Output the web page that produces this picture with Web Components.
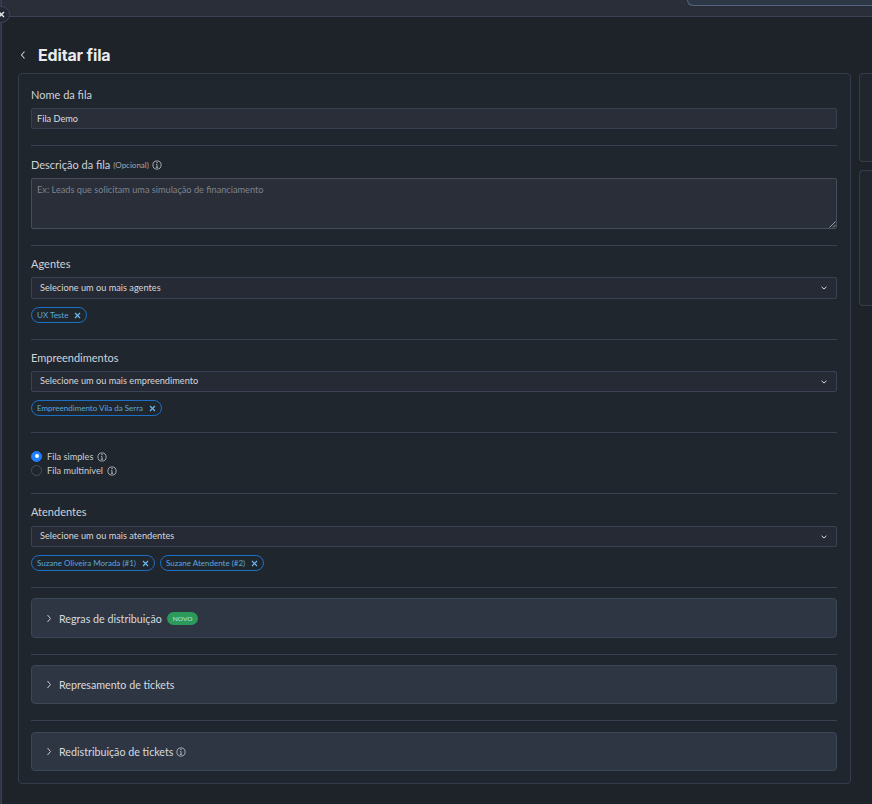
<!DOCTYPE html>
<html lang="pt-BR">
<head>
<meta charset="utf-8">
<title>Editar fila</title>
<style>
  html, body { margin: 0; height: 100%; background: #1e2229; overflow: hidden; }
  body { font-family: Lato, "Liberation Sans", sans-serif; color: #d5d8de; }
</style>
</head>
<body>
<app-shell>
  <side-panel slot="side" height="89"></side-panel>
  <side-panel slot="side" height="136"></side-panel>

  <form-section pad="13px 0 16px">
    <field-label gap="6">Nome da fila</field-label>
    <text-box>Fila Demo</text-box>
  </form-section>

  <form-section pad="11px 0 16px">
    <field-label gap="6">Descrição da fila <small>(Opcional)</small> <info-icon></info-icon></field-label>
    <text-box multiline placeholder>Ex: Leads que solicitam uma simulação de financiamento</text-box>
  </form-section>

  <form-section pad="10px 0 16px">
    <field-label gap="6">Agentes</field-label>
    <select-box height="22">Selecione um ou mais agentes</select-box>
    <chip-list>
      <tag-chip>UX Teste</tag-chip>
    </chip-list>
  </form-section>

  <form-section pad="10px 0 16px">
    <field-label gap="6">Empreendimentos</field-label>
    <select-box>Selecione um ou mais empreendimento</select-box>
    <chip-list>
      <tag-chip>Empreendimento Vila da Serra</tag-chip>
    </chip-list>
  </form-section>

  <form-section pad="16px 0 16px">
    <radio-row checked>Fila simples <info-icon></info-icon></radio-row>
    <radio-row>Fila multinível <info-icon></info-icon></radio-row>
  </form-section>

  <form-section pad="10px 0 16px">
    <field-label gap="7">Atendentes</field-label>
    <select-box>Selecione um ou mais atendentes</select-box>
    <chip-list>
      <tag-chip>Suzane Oliveira Morada (#1)</tag-chip>
      <tag-chip>Suzane Atendente (#2)</tag-chip>
    </chip-list>
  </form-section>

  <form-section pad="10px 0 16px">
    <accordion-row height="40">Regras de distribuição <new-badge>NOVO</new-badge></accordion-row>
  </form-section>

  <form-section pad="10px 0 16px">
    <accordion-row>Represamento de tickets</accordion-row>
  </form-section>

  <form-section pad="11px 0 0" last>
    <accordion-row>Redistribuição de tickets <info-icon></info-icon></accordion-row>
  </form-section>
</app-shell>

<script>
  // small helper so each element only has to give its markup
  class ShadowEl extends HTMLElement {
    constructor() {
      super();
      this.attachShadow({ mode: 'open' });
    }
    connectedCallback() {
      this.shadowRoot.innerHTML = this.markup();
    }
  }

  class AppShell extends ShadowEl {
    markup() {
      return `
      <style>
        :host { display: flex; flex-direction: column; height: 804px; overflow: hidden; position: relative; }
        .rail { position: absolute; left: 0; top: 0; bottom: 0; width: 1px; background: #2f3547; border-right: 1px solid #3a4056; }
        .toggle {
          position: absolute; left: -7px; top: 6px; width: 15px; height: 15px; border-radius: 50%;
          background: #232834; border: 1px solid #3d4659; display: flex; align-items: center; justify-content: center;
        }
        .top {
          height: 16px; flex: none; background: #292e39; border-bottom: 1px solid #3a4254;
          display: flex; justify-content: flex-end;
        }
        .search {
          width: 184px; height: 5px; background: #2d3847; border: 1px solid #55637f; border-top: 0; border-right: 0;
          border-bottom-left-radius: 7px;
        }
        .body { flex: 1; padding: 0 0 0 18px; min-height: 0; }
        h1 {
          margin: 0; height: 56px; box-sizing: border-box; padding-top: 20px;
          display: flex; align-items: center; gap: 11px;
          font: 700 16px/22px Inter, Lato, sans-serif; letter-spacing: -0.15px; color: #e9ebee;
        }
        .row { display: flex; gap: 8px; align-items: flex-start; }
        .card {
          flex: none; box-sizing: border-box; width: 833px; height: 711px; padding: 0 13px 0 12px;
          background: #20262e; border: 1px solid #343c4b; border-radius: 4px;
        }
        .side { flex: 1; display: flex; flex-direction: column; gap: 8px; min-width: 0; }
      </style>
      <div class="rail"></div>
      <header class="top"><div class="search"></div></header>
      <div class="toggle">
        <svg width="7" height="7" viewBox="0 0 7 7" fill="none" stroke="#e6e8ec" stroke-width="1.4"><path d="M1 1l5 5M6 1L1 6"/></svg>
      </div>
      <div class="body">
        <h1>
          <svg width="8" height="10" viewBox="0 0 8 10" fill="none" stroke="#c9ccd2" stroke-width="1.1" style="margin-left:1px"><path d="M5.5 1.5L2.5 5l3 3.5"/></svg>
          <span>Editar fila</span>
        </h1>
        <div class="row">
          <main class="card"><slot></slot></main>
          <aside class="side"><slot name="side"></slot></aside>
        </div>
      </div>`;
    }
  }

  class SidePanel extends ShadowEl {
    markup() {
      const h = this.getAttribute('height') || 88;
      return `
      <style>
        :host { display: block; box-sizing: border-box; height: ${h}px; background: #20262e;
          border: 1px solid #343c4b; border-right: 0; border-radius: 4px 0 0 4px; }
      </style>`;
    }
  }

  class FormSection extends ShadowEl {
    markup() {
      const pad = this.getAttribute('pad') || '12px 0 16px';
      const line = this.hasAttribute('last') ? '0' : '1px solid #3a4150';
      return `
      <style>
        :host { display: block; padding: ${pad}; border-bottom: ${line}; }
      </style>
      <slot></slot>`;
    }
  }

  class FieldLabel extends ShadowEl {
    markup() {
      const gap = this.getAttribute('gap') || 5;
      return `
      <style>
        :host { display: flex; align-items: center; gap: 3px; height: 15px; font-size: 11px; line-height: 15px; color: #cfd2d8; margin-bottom: ${gap}px; }
        ::slotted(small) { font-size: 8px; line-height: 15px; color: #a3a8b2; padding-top: 2px; }
      </style>
      <slot></slot>`;
    }
  }

  class TextBox extends ShadowEl {
    markup() {
      const multi = this.hasAttribute('multiline');
      const ph = this.hasAttribute('placeholder');
      return `
      <style>
        :host {
          display: block; box-sizing: border-box; position: relative;
          height: ${multi ? 51 : 21}px; padding: ${multi ? '4px' : '3px'} 5px 0 5px;
          background: #292e38; border: 1px solid ${multi ? '#474d5a' : '#39404f'}; border-radius: 2px;
          font-size: 9.2px; line-height: 13px; color: ${ph ? '#7e838d' : '#d9dbe0'};
        }
        svg { position: absolute; right: 0; bottom: 0; }
      </style>
      <slot></slot>
      ${multi ? '<svg width="7" height="7" viewBox="0 0 7 7" fill="none" stroke="#b9bcc3" stroke-width=".8"><path d="M0.5 6.5l6-6M4 6.5l2.5-2.5"/></svg>' : ''}`;
    }
  }

  class SelectBox extends ShadowEl {
    markup() {
      const h = this.getAttribute('height') || 21;
      return `
      <style>
        :host {
          display: flex; align-items: center; justify-content: space-between; box-sizing: border-box;
          height: ${h}px; padding: 0 8px 2px 8px;
          background: #252a34; border: 1px solid #3a4354; border-radius: 2px;
          font-size: 9.2px; color: #d5d7dc;
        }
        svg { margin-top: 2px; }
      </style>
      <slot></slot>
      <svg width="8" height="6" viewBox="0 0 8 6" fill="none" stroke="#d4d6db" stroke-width="1"><path d="M1.5 1.8L4 4l2.5-2.2"/></svg>`;
    }
  }

  class ChipList extends ShadowEl {
    markup() {
      return `
      <style>
        :host { display: flex; gap: 5px; margin-top: 8px; }
      </style>
      <slot></slot>`;
    }
  }

  class TagChip extends ShadowEl {
    markup() {
      return `
      <style>
        :host {
          display: inline-flex; align-items: center; gap: 6px; box-sizing: border-box;
          height: 16px; padding: 0 5px 0 5px;
          border: 1px solid #1d6fc4; border-radius: 8px;
          font-size: 8px; color: #5ba7dc; white-space: nowrap;
        }
      </style>
      <slot></slot>
      <svg width="7" height="7" viewBox="0 0 7 7" fill="none" stroke="#6db8ec" stroke-width="1.2"><path d="M1 1l5 5M6 1L1 6"/></svg>`;
    }
  }

  class RadioRow extends ShadowEl {
    markup() {
      const on = this.hasAttribute('checked');
      return `
      <style>
        :host { display: flex; align-items: center; gap: 5px; height: 14px; font-size: 9.2px; color: #c9ccd3; }
        .dot {
          flex: none; box-sizing: border-box; width: 11px; height: 11px; border-radius: 50%;
          background: ${on ? '#1f7dff' : '#20262e'}; border: 1px solid ${on ? '#1f7dff' : '#4a505c'};
          display: flex; align-items: center; justify-content: center;
        }
        .dot i { width: 4px; height: 4px; border-radius: 50%; background: #fff; display: ${on ? 'block' : 'none'}; }
        .text { display: flex; align-items: center; gap: 4px; }
        ::slotted(info-icon) { margin-top: 1px; }
      </style>
      <span class="dot"><i></i></span>
      <span class="text"><slot></slot></span>`;
    }
  }

  class AccordionRow extends ShadowEl {
    markup() {
      const h = this.getAttribute('height') || 39;
      return `
      <style>
        :host {
          display: flex; align-items: center; gap: 7px; box-sizing: border-box;
          height: ${h}px; padding: 0 14px;
          background: #2e3644; border: 1px solid #3c4659; border-radius: 4px;
          font-size: 10.7px; color: #d8dade;
        }
        .text { display: flex; align-items: center; gap: 3px; }
      </style>
      <svg width="6" height="9" viewBox="0 0 6 9" fill="none" stroke="#c8cbd1" stroke-width="1"><path d="M1.5 1l3 3.5-3 3.5"/></svg>
      <span class="text"><slot></slot></span>`;
    }
  }

  class NewBadge extends ShadowEl {
    markup() {
      return `
      <style>
        :host {
          display: inline-block; box-sizing: border-box; height: 13px; margin-left: 2px; padding: 0 6px;
          background: #2b9a5b; border-radius: 7px;
          font-size: 6.5px; line-height: 13px; color: #c6ead5;
        }
      </style>
      <slot></slot>`;
    }
  }

  class InfoIcon extends ShadowEl {
    markup() {
      return `
      <style>:host { display: inline-block; flex: none; width: 10px; height: 10px; line-height: 0; }</style>
      <svg width="10" height="10" viewBox="0 0 10 10" fill="none" stroke="#c4c7ce" stroke-width=".8">
        <circle cx="5" cy="5" r="4.1"/>
        <path d="M5 4.5v2.8M3.9 7.3h2.2M4.2 4.5H5"/>
        <circle cx="5" cy="2.8" r=".3" fill="#c4c7ce"/>
      </svg>`;
    }
  }

  customElements.define('app-shell', AppShell);
  customElements.define('side-panel', SidePanel);
  customElements.define('form-section', FormSection);
  customElements.define('field-label', FieldLabel);
  customElements.define('text-box', TextBox);
  customElements.define('select-box', SelectBox);
  customElements.define('chip-list', ChipList);
  customElements.define('tag-chip', TagChip);
  customElements.define('radio-row', RadioRow);
  customElements.define('accordion-row', AccordionRow);
  customElements.define('new-badge', NewBadge);
  customElements.define('info-icon', InfoIcon);
</script>
</body>
</html>
